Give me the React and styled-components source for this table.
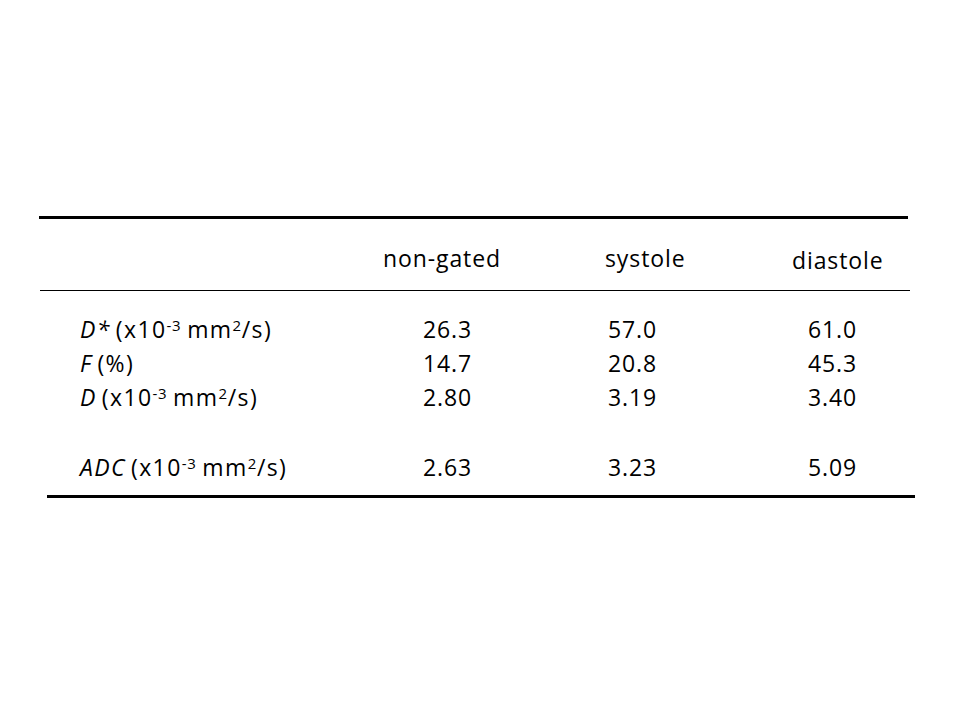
import React from 'react';
import styled, { createGlobalStyle } from 'styled-components';

const GlobalStyle = createGlobalStyle`
  html, body {
    margin: 0;
    padding: 0;
    background: #ffffff;
  }
`;

const Slide = styled.div`
  width: 960px;
  height: 720px;
  padding-top: 216px;
  box-sizing: border-box;
  background: #ffffff;
  font-family: 'Open Sans', 'Liberation Sans', sans-serif;
  font-size: 23px;
  letter-spacing: 0.9px;
  color: #000000;
  overflow: hidden;
`;

const Rule = styled.div`
  margin-left: ${(p) => p.$left}px;
  width: ${(p) => p.$right - p.$left}px;
  height: ${(p) => p.$weight}px;
  background: #000000;
  margin-top: ${(p) => p.$top || 0}px;
`;

const HeadRow = styled.div`
  display: grid;
  grid-template-columns: 383px 222px 187px 1fr;
  height: 34px;
  line-height: 34px;
  margin-top: 22px;
  margin-bottom: 15px;
`;

const HeadCell = styled.div`
  white-space: nowrap;
  padding-top: ${(p) => p.$drop || 0}px;
`;

const Body = styled.div`
  padding-top: 21px;
`;

const Row = styled.div`
  display: grid;
  grid-template-columns: 423px 185px 200px 1fr;
  height: 34px;
  line-height: 34px;
  margin-top: ${(p) => p.$gap || 0}px;
  white-space: nowrap;
`;

const Label = styled.div`
  padding-left: 80px;
  letter-spacing: 1.4px;
`;

const Sym = styled.i`
  font-style: italic;
  margin-right: 5px;
`;

const Sup = styled.sup`
  font-size: 15px;
  line-height: 0;
  vertical-align: 7px;
  letter-spacing: 0.6px;
  margin-right: ${(p) => p.$after || 0}px;
`;

const Value = styled.div``;

const Unit = () => (
  <>
    (x10<Sup $after={6}>-3</Sup>mm<Sup>2</Sup>/s)
  </>
);

const rows = [
  { sym: 'D*', unit: true, vals: ['26.3', '57.0', '61.0'] },
  { sym: 'F', text: '(%)', vals: ['14.7', '20.8', '45.3'] },
  { sym: 'D', unit: true, vals: ['2.80', '3.19', '3.40'] },
  { sym: 'ADC', unit: true, vals: ['2.63', '3.23', '5.09'], gap: 36 },
];

export default function App() {
  return (
    <>
      <GlobalStyle />
      <Slide>
        <Rule $left={39} $right={908} $weight={3} />
        <HeadRow>
          <span />
          <HeadCell>non-gated</HeadCell>
          <HeadCell>systole</HeadCell>
          <HeadCell $drop={2}>diastole</HeadCell>
        </HeadRow>
        <Rule $left={40} $right={910} $weight={1} />
        <Body>
          {rows.map((r) => (
            <Row key={r.sym} $gap={r.gap}>
              <Label>
                <Sym>{r.sym}</Sym>
                {r.unit ? <Unit /> : r.text}
              </Label>
              {r.vals.map((v, i) => (
                <Value key={i}>{v}</Value>
              ))}
            </Row>
          ))}
        </Body>
        <Rule $left={47} $right={915} $weight={3} $top={11} />
      </Slide>
    </>
  );
}
